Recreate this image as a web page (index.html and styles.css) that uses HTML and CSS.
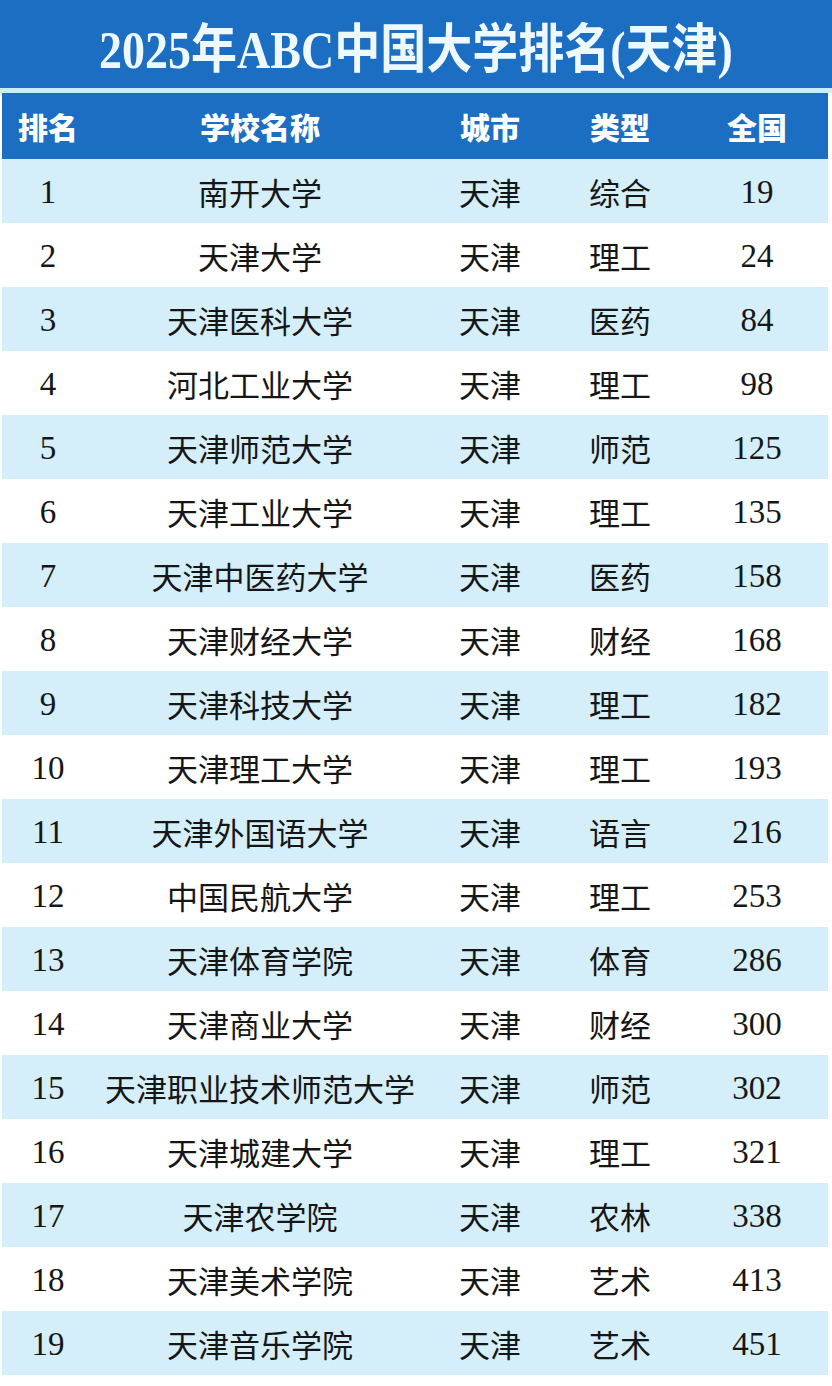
FILE: index.html
```html
<!DOCTYPE html>
<html lang="zh">
<head>
<meta charset="utf-8">
<title>2025年ABC中国大学排名(天津)</title>
<link rel="stylesheet" href="styles.css">
</head>
<body>
<div class="sheet">
  <div class="title"><span class="title-text">2025年ABC中国大学排名(天津)</span></div>
  <div class="row head">
    <div>排名</div><div>学校名称</div><div>城市</div><div>类型</div><div>全国</div>
  </div>
  <div class="row alt"><div class="num">1</div><div>南开大学</div><div>天津</div><div>综合</div><div class="num">19</div></div>
  <div class="row"><div class="num">2</div><div>天津大学</div><div>天津</div><div>理工</div><div class="num">24</div></div>
  <div class="row alt"><div class="num">3</div><div>天津医科大学</div><div>天津</div><div>医药</div><div class="num">84</div></div>
  <div class="row"><div class="num">4</div><div>河北工业大学</div><div>天津</div><div>理工</div><div class="num">98</div></div>
  <div class="row alt"><div class="num">5</div><div>天津师范大学</div><div>天津</div><div>师范</div><div class="num">125</div></div>
  <div class="row"><div class="num">6</div><div>天津工业大学</div><div>天津</div><div>理工</div><div class="num">135</div></div>
  <div class="row alt"><div class="num">7</div><div>天津中医药大学</div><div>天津</div><div>医药</div><div class="num">158</div></div>
  <div class="row"><div class="num">8</div><div>天津财经大学</div><div>天津</div><div>财经</div><div class="num">168</div></div>
  <div class="row alt"><div class="num">9</div><div>天津科技大学</div><div>天津</div><div>理工</div><div class="num">182</div></div>
  <div class="row"><div class="num">10</div><div>天津理工大学</div><div>天津</div><div>理工</div><div class="num">193</div></div>
  <div class="row alt"><div class="num">11</div><div>天津外国语大学</div><div>天津</div><div>语言</div><div class="num">216</div></div>
  <div class="row"><div class="num">12</div><div>中国民航大学</div><div>天津</div><div>理工</div><div class="num">253</div></div>
  <div class="row alt"><div class="num">13</div><div>天津体育学院</div><div>天津</div><div>体育</div><div class="num">286</div></div>
  <div class="row"><div class="num">14</div><div>天津商业大学</div><div>天津</div><div>财经</div><div class="num">300</div></div>
  <div class="row alt"><div class="num">15</div><div>天津职业技术师范大学</div><div>天津</div><div>师范</div><div class="num">302</div></div>
  <div class="row"><div class="num">16</div><div>天津城建大学</div><div>天津</div><div>理工</div><div class="num">321</div></div>
  <div class="row alt"><div class="num">17</div><div>天津农学院</div><div>天津</div><div>农林</div><div class="num">338</div></div>
  <div class="row"><div class="num">18</div><div>天津美术学院</div><div>天津</div><div>艺术</div><div class="num">413</div></div>
  <div class="row alt"><div class="num">19</div><div>天津音乐学院</div><div>天津</div><div>艺术</div><div class="num">451</div></div>
</div>
</body>
</html>
```

FILE: styles.css
```css
html, body {
  margin: 0;
  padding: 0;
  background: #ffffff;
}
body {
  font-family: "Noto Sans CJK SC", "Noto Sans", sans-serif;
  color: #161616;
}
.sheet {
  margin: 0 4px 0 2px;
  display: flex;
  flex-direction: column;
}
.title {
  height: 88px;
  background: #1b6ec2;
  color: #eef8ff;
  font-family: "Liberation Serif", "Noto Sans CJK SC", serif;
  font-size: 46px;
  font-weight: 700;
  display: flex;
  align-items: center;
  justify-content: center;
  border-bottom: 5px solid #cbecf8;
  margin-left: -2px;
  margin-right: -4px;
}
.title-text {
  display: inline-block;
  transform: scaleY(1.15);
  padding-top: 2px;
}
.row {
  display: grid;
  grid-template-columns: 92px 332px 128px 132px 142px;
  height: 64px;
  align-items: center;
  font-size: 31px;
}
.row > div {
  text-align: center;
  white-space: nowrap;
}
.row.head {
  height: 66px;
  background: #1b6ec2;
  color: #ffffff;
  font-weight: 900;
  font-size: 30px;
}
.row.alt {
  background: #d4eefa;
}
.num {
  font-family: "Liberation Serif", serif;
  font-size: 33px;
  padding-top: 3px;
}
```
